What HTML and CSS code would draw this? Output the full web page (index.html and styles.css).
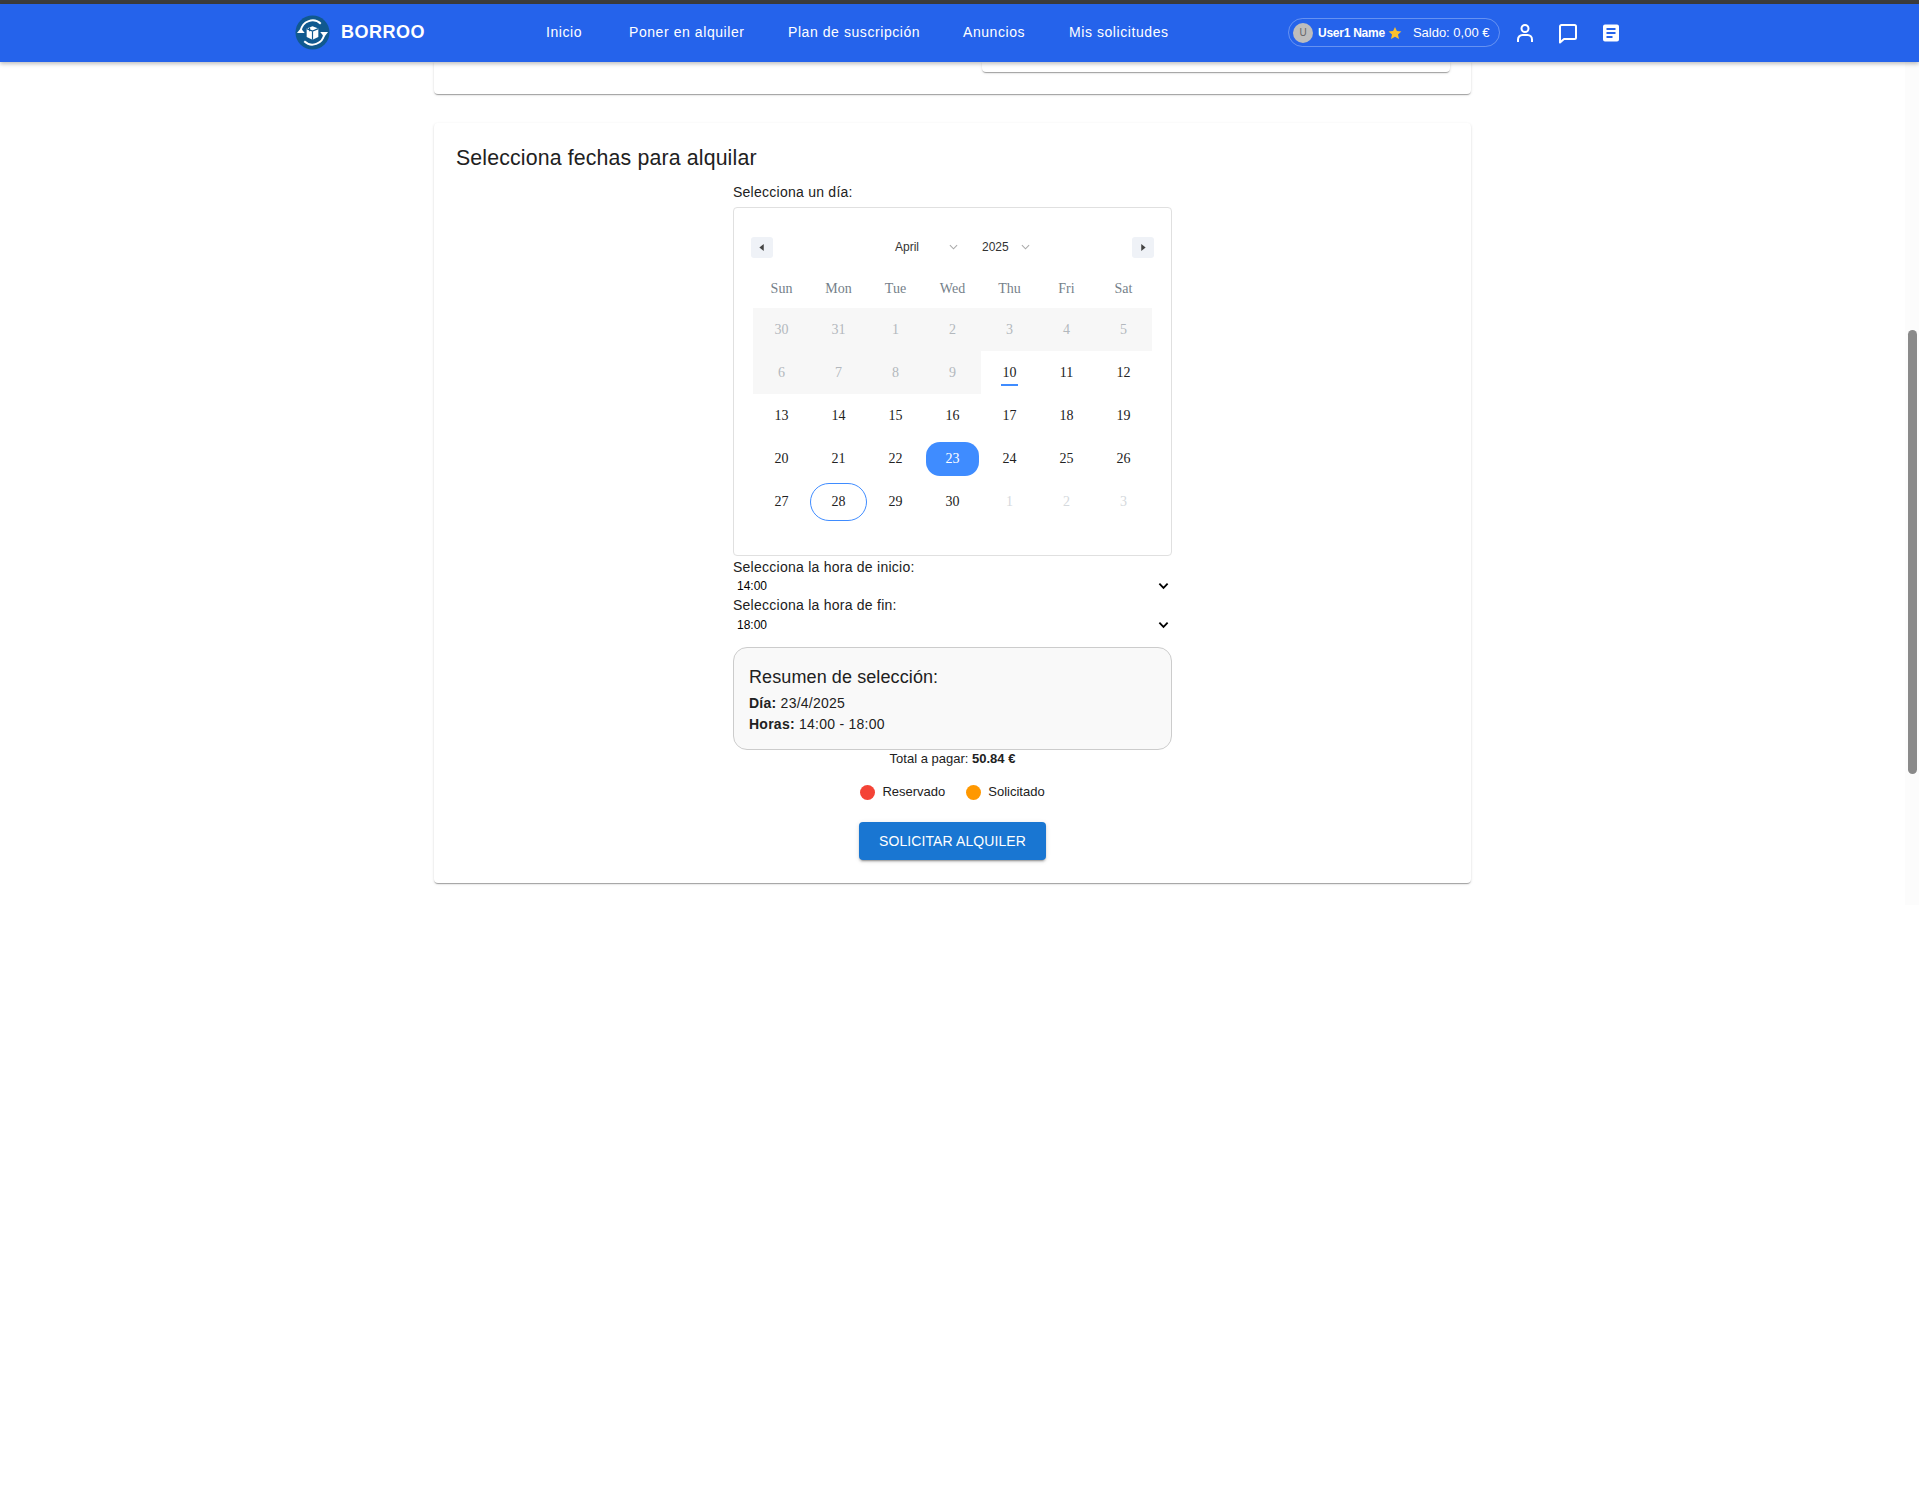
FILE: index.html
```html
<!DOCTYPE html>
<html>
<head>
  <title>Borroo</title>
  <link rel="stylesheet" href="styles.css">
</head>
<body>
  <div class="top-edge"></div>
  <header class="navbar">
    <a class="brand">
      <svg class="logo" viewBox="0 0 36 36">
        <circle cx="18" cy="18" r="17.5" fill="#10598f"/>
        <path d="M6 16a12.200 12.200 0 0 1 20.500-7" fill="none" stroke="#fff" stroke-width="2"/>
        <path d="M30 20a12.200 12.200 0 0 1-20.500 7" fill="none" stroke="#fff" stroke-width="2"/>
        <path d="M2 18.500l4-5 4 5z" fill="#fff"/>
        <path d="M26 17.500l4 5 4-5z" fill="#fff"/>
        <path d="M12 14l6-2.500 6 2.500v8.500l-6 3-6-3z" fill="#fff"/>
        <path d="M18 16.500v9M12 14l6 2.500 6-2.500M15 12.800v4" fill="none" stroke="#10598f" stroke-width="1.200"/>
      </svg>
      <span class="brand-name">BORROO</span>
    </a>
    <nav class="nav-links">
      <a class="nav-inicio">Inicio</a>
      <a class="nav-poner">Poner en alquiler</a>
      <a class="nav-plan">Plan de suscripción</a>
      <a class="nav-anuncios">Anuncios</a>
      <a>Mis solicitudes</a>
    </nav>
    <div class="user-pill">
      <span class="avatar">U</span>
      <span class="user-name">User1 Name</span>
      <svg class="star" viewBox="0 0 24 24"><path d="M12 1.500l3.200 7.200 7.800.8-5.900 5.200 1.700 7.700L12 18.400l-6.800 4 1.700-7.700L1 9.500l7.800-.8z" fill="#fbc02d"/></svg>
      <span class="saldo">Saldo: 0,00 €</span>
    </div>
    <div class="nav-icons">
      <svg viewBox="0 0 24 24" fill="none" stroke="#fff" stroke-width="2"><circle cx="12" cy="7.500" r="3.500"/><path d="M5 21v-2.500a4.500 4.500 0 0 1 4.500-4.500h5a4.500 4.500 0 0 1 4.500 4.500V21"/></svg>
      <svg viewBox="0 0 24 24" fill="none" stroke="#fff" stroke-width="2"><path d="M4 5.500a1.500 1.500 0 0 1 1.500-1.500h13a1.500 1.500 0 0 1 1.500 1.500v11a1.500 1.500 0 0 1-1.500 1.500H8l-4 3.500z" stroke-linejoin="round"/></svg>
      <svg viewBox="0 0 24 24"><path d="M6 3.500h12a2 2 0 0 1 2 2v13a2 2 0 0 1-2 2H6a2 2 0 0 1-2-2v-13a2 2 0 0 1 2-2z" fill="#fff"/><path d="M7.500 8h9M7.500 12h9M7.500 16h6" stroke="#2563eb" stroke-width="2"/></svg>
    </div>
  </header>

  <main class="content">
    <section class="card card-stub">
      <div class="inner-stub"></div>
    </section>

    <section class="card card-dates">
      <h2 class="card-title">Selecciona fechas para alquilar</h2>
      <div class="picker">
        <label class="field-label">Selecciona un día:</label>
        <div class="calendar">
          <div class="cal-head">
            <button class="cal-arrow"><svg viewBox="0 0 6 8"><path d="M5 0v8L0 4z"/></svg></button>
            <div class="cal-selects">
              <span class="cal-month">April<svg viewBox="0 0 10 6"><path d="M1 1l4 4 4-4"/></svg></span>
              <span class="cal-year">2025<svg viewBox="0 0 10 6"><path d="M1 1l4 4 4-4"/></svg></span>
            </div>
            <button class="cal-arrow"><svg viewBox="0 0 6 8"><path d="M1 0v8l5-4z"/></svg></button>
          </div>
          <div class="cal-weekdays">
            <span>Sun</span><span>Mon</span><span>Tue</span><span>Wed</span><span>Thu</span><span>Fri</span><span>Sat</span>
          </div>
          <div class="cal-grid">
            <span class="day past">30</span><span class="day past">31</span><span class="day past">1</span><span class="day past">2</span><span class="day past">3</span><span class="day past">4</span><span class="day past">5</span>
            <span class="day past">6</span><span class="day past">7</span><span class="day past">8</span><span class="day past">9</span><span class="day today">10</span><span class="day">11</span><span class="day">12</span>
            <span class="day">13</span><span class="day">14</span><span class="day">15</span><span class="day">16</span><span class="day">17</span><span class="day">18</span><span class="day">19</span>
            <span class="day">20</span><span class="day">21</span><span class="day">22</span><span class="day selected">23</span><span class="day">24</span><span class="day">25</span><span class="day">26</span>
            <span class="day">27</span><span class="day hovered">28</span><span class="day">29</span><span class="day">30</span><span class="day other">1</span><span class="day other">2</span><span class="day other">3</span>
          </div>
        </div>

        <label class="field-label label-start">Selecciona la hora de inicio:</label>
        <div class="time-select select-start">14:00<svg viewBox="0 0 12 8"><path d="M1.500 1.500L6 6l4.500-4.500"/></svg></div>
        <label class="field-label">Selecciona la hora de fin:</label>
        <div class="time-select">18:00<svg viewBox="0 0 12 8"><path d="M1.500 1.500L6 6l4.500-4.500"/></svg></div>

        <div class="summary">
          <h3>Resumen de selección:</h3>
          <p><b>Día:</b> 23/4/2025</p>
          <p><b>Horas:</b> 14:00 - 18:00</p>
        </div>

        <p class="total">Total a pagar: <b>50.84 €</b></p>

        <div class="legend">
          <span class="legend-item"><i class="dot dot-red"></i>Reservado</span>
          <span class="legend-item"><i class="dot dot-orange"></i>Solicitado</span>
        </div>

        <button class="submit-btn">SOLICITAR ALQUILER</button>
      </div>
    </section>
  </main>

  <div class="scroll-track"><div class="scroll-thumb"></div></div>
</body>
</html>
```

FILE: styles.css
```css
html, body {
  margin: 0;
  background: #fff;
}

body {
  height: 1495px;
  overflow: hidden;
  position: relative;
  font-family: "Liberation Sans", Arial, sans-serif;
  color: #212121;
}

.top-edge {
  height: 4px;
  background: #3c3c3c;
}

.navbar {
  height: 58px;
  box-sizing: border-box;
  background: #2563eb;
  color: #fff;
  display: flex;
  align-items: center;
  padding: 0 0 1px 295px;
  box-shadow: 0 2px 4px rgba(0, 0, 0, 0.25);
  position: relative;
  z-index: 2;
}

.brand {
  display: flex;
  align-items: center;
  gap: 11px;
  width: 251px;
}

.logo {
  width: 35px;
  height: 35px;
}

.brand-name {
  font-size: 18px;
  font-weight: bold;
  letter-spacing: 0.5px;
}

.nav-links {
  display: flex;
  width: 742px;
  padding-bottom: 2px;
  font-size: 14px;
  letter-spacing: 0.57px;
}

.nav-inicio { width: 83px; }
.nav-poner { width: 159px; }
.nav-plan { width: 175px; }
.nav-anuncios { width: 106px; }

.user-pill {
  width: 212px;
  height: 29px;
  box-sizing: border-box;
  border: 1px solid rgba(255, 255, 255, 0.3);
  border-radius: 15px;
  display: flex;
  align-items: center;
  padding-left: 4px;
  font-size: 12px;
}

.avatar {
  width: 20px;
  height: 20px;
  border-radius: 50%;
  background: #bdbdbd;
  color: #666;
  font-size: 10px;
  display: flex;
  align-items: center;
  justify-content: center;
  margin-right: 5px;
}

.user-name {
  font-weight: bold;
  letter-spacing: -0.25px;
}

.star {
  width: 14px;
  height: 14px;
  margin: 0 11px 0 3px;
}

.saldo {
  font-size: 13px;
}

.nav-icons {
  display: flex;
  gap: 19px;
  margin-left: 13px;
}

.nav-icons svg {
  width: 24px;
  height: 24px;
}

.content {
  width: 1037px;
  margin-left: 434px;
}

.card {
  background: #fff;
  border-radius: 4px;
  box-shadow: 0 2px 1px -1px rgba(0, 0, 0, 0.2), 0 1px 1px 0 rgba(0, 0, 0, 0.14), 0 1px 3px 0 rgba(0, 0, 0, 0.12);
}

.card-stub {
  height: 32px;
  margin-bottom: 29px;
  border-radius: 0 0 4px 4px;
}

.inner-stub {
  width: 468px;
  height: 10px;
  margin-left: 548px;
  background: #fff;
  border-radius: 0 0 4px 4px;
  box-shadow: 0 2px 1px -1px rgba(0, 0, 0, 0.2), 0 1px 1px 0 rgba(0, 0, 0, 0.14), 0 1px 3px 0 rgba(0, 0, 0, 0.12);
}

.card-dates {
  height: 760px;
  box-sizing: border-box;
  padding: 23px 22px 0;
}

.card-title {
  margin: 0 0 12px;
  font-size: 21.3px;
  font-weight: normal;
  line-height: 24px;
  letter-spacing: 0.15px;
}

.picker {
  width: 439px;
  margin-left: 277px;
  display: flex;
  flex-direction: column;
}

.field-label {
  font-size: 14px;
  line-height: 20px;
  letter-spacing: 0.25px;
  height: 20px;
}

.label-start {
  margin-top: 1px;
}

.calendar {
  height: 349px;
  box-sizing: border-box;
  margin-top: 5px;
  border: 1px solid #e0e0e0;
  border-radius: 4px;
  padding: 28px 17px 0;
  font-family: "Liberation Serif", "Times New Roman", serif;
}

.cal-head {
  display: flex;
  justify-content: space-between;
  align-items: center;
  height: 22px;
}

.cal-arrow {
  width: 22px;
  height: 21px;
  padding: 0;
  border: none;
  border-radius: 3px;
  background: #eff2f7;
  display: flex;
  align-items: center;
  justify-content: center;
}

.cal-arrow svg {
  width: 6px;
  height: 7px;
  fill: #444;
}

.cal-selects {
  display: flex;
  font-family: "Liberation Sans", Arial, sans-serif;
  font-size: 12px;
  color: #333;
  margin-left: 20px;
}

.cal-month, .cal-year {
  display: flex;
  align-items: center;
  justify-content: space-between;
}

.cal-month {
  width: 63px;
  margin-right: 24px;
}

.cal-year {
  width: 48px;
}

.cal-selects svg {
  width: 9px;
  height: 6px;
  fill: none;
  stroke: #aaa;
  stroke-width: 1.200;
}

.cal-weekdays, .cal-grid {
  display: grid;
  grid-template-columns: repeat(7, 57px);
  margin-left: 2px;
}

.cal-weekdays {
  height: 38px;
  align-items: center;
  margin-top: 12px;
  font-size: 14px;
  color: #757f8a;
  text-align: center;
}

.day {
  height: 43px;
  display: flex;
  align-items: center;
  justify-content: center;
  font-size: 14px;
  color: #222;
  position: relative;
  isolation: isolate;
}

.past {
  background: #f7f7f7;
  color: #b3b8bd;
}

.other {
  color: #d5d9dd;
}

.today::after {
  content: "";
  position: absolute;
  left: 20px;
  bottom: 8px;
  width: 17px;
  height: 2px;
  background: #3f8cff;
}

.selected::before, .hovered::before {
  content: "";
  position: absolute;
  box-sizing: border-box;
}

.selected {
  color: #fff;
}

.selected::before {
  z-index: -1;
  left: 2px;
  top: 5px;
  width: 53px;
  height: 34px;
  border-radius: 14px;
  background: #3f8cff;
}

.hovered::before {
  left: 0;
  top: 3px;
  width: 57px;
  height: 38px;
  border-radius: 19px;
  border: 1px solid #3f8cff;
}

.time-select {
  height: 19px;
  display: flex;
  justify-content: space-between;
  align-items: center;
  padding: 0 3px 0 4px;
  font-size: 12px;
  color: #000;
}

.select-start {
  height: 18px;
}

.time-select svg {
  width: 11px;
  height: 8px;
  fill: none;
  stroke: #000;
  stroke-width: 2;
}

.summary {
  height: 103px;
  box-sizing: border-box;
  margin-top: 13px;
  padding: 17px 15px 0;
  border: 1px solid #ccc;
  border-radius: 14px;
  background: #f9f9f9;
}

.summary h3 {
  margin: 0 0 4px;
  font-size: 18px;
  font-weight: normal;
  line-height: 24px;
  letter-spacing: 0.1px;
}

.summary p {
  margin: 0;
  font-size: 14px;
  line-height: 21px;
  letter-spacing: 0.25px;
}

.total {
  margin: 0;
  font-size: 13px;
  line-height: 18px;
  text-align: center;
}

.legend {
  display: flex;
  justify-content: center;
  gap: 21px;
  margin-top: 15px;
  font-size: 13px;
  line-height: 18px;
}

.legend-item {
  display: flex;
  align-items: center;
}

.dot {
  width: 15px;
  height: 15px;
  border-radius: 50%;
  margin-right: 7px;
}

.dot-red { background: #f44336; }
.dot-orange { background: #ff9800; }

.submit-btn {
  align-self: center;
  width: 187px;
  height: 38px;
  margin-top: 21px;
  border: none;
  border-radius: 4px;
  background: #1976d2;
  color: #fff;
  font-family: inherit;
  font-size: 14px;
  letter-spacing: 0.1px;
  box-shadow: 0 3px 1px -2px rgba(0, 0, 0, 0.2), 0 2px 2px 0 rgba(0, 0, 0, 0.14), 0 1px 5px 0 rgba(0, 0, 0, 0.12);
}

.scroll-track {
  position: absolute;
  top: 62px;
  right: 0;
  width: 14px;
  height: 843px;
  background: #fcfcfc;
}

.scroll-thumb {
  position: absolute;
  top: 268px;
  left: 3px;
  width: 9px;
  height: 444px;
  border-radius: 5px;
  background: #8a8a8a;
}
```
